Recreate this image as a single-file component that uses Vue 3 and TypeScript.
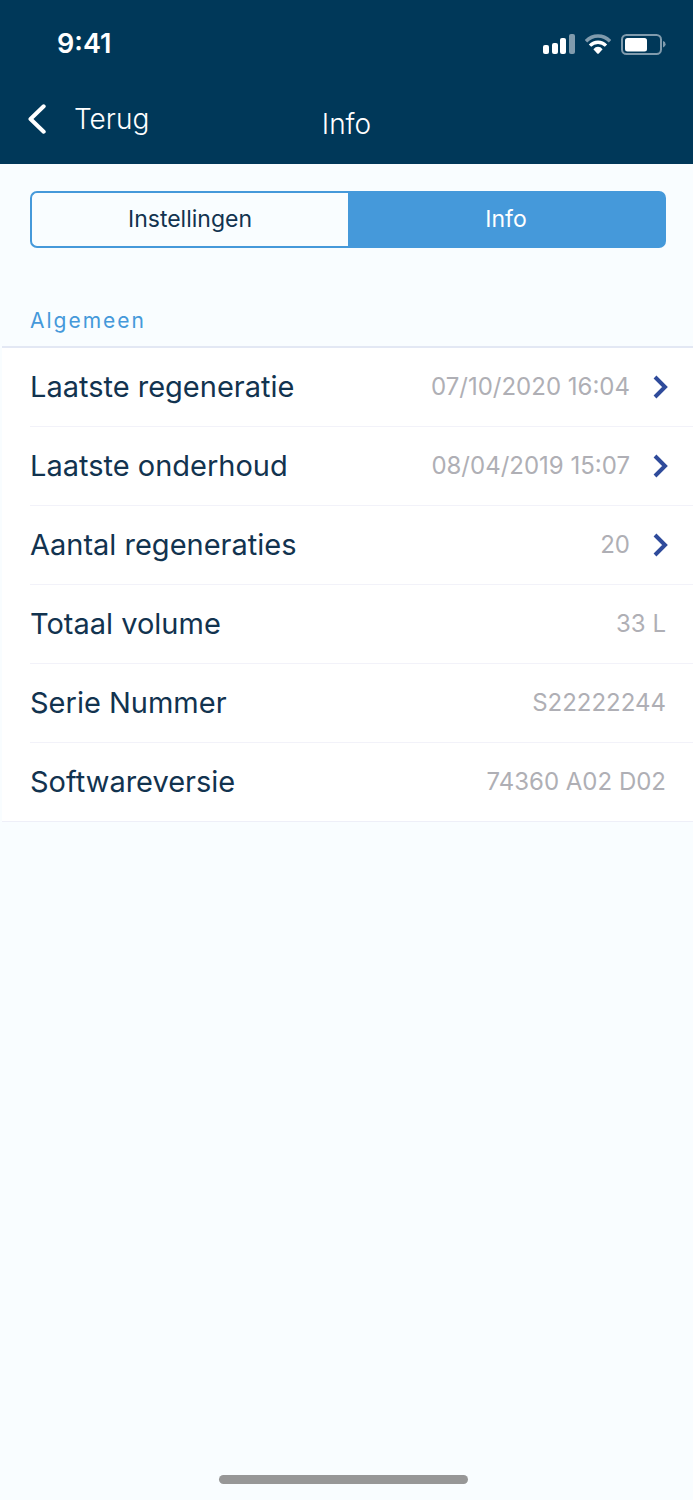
<script setup lang="ts">
import { ref } from 'vue'

interface InfoRow {
  label: string
  value: string
  link: boolean
}

const tabs: string[] = ['Instellingen', 'Info']
const activeTab = ref<string>('Info')

const rows: InfoRow[] = [
  { label: 'Laatste regeneratie', value: '07/10/2020 16:04', link: true },
  { label: 'Laatste onderhoud', value: '08/04/2019 15:07', link: true },
  { label: 'Aantal regeneraties', value: '20', link: true },
  { label: 'Totaal volume', value: '33 L', link: false },
  { label: 'Serie Nummer', value: 'S22222244', link: false },
  { label: 'Softwareversie', value: '74360 A02 D02', link: false },
]
</script>

<template>
  <div class="screen">
    <header class="top">
      <div class="status">
        <span class="time">9:41</span>
        <div class="indicators">
          <svg width="32" height="20" viewBox="0 0 32 20" aria-hidden="true">
            <rect x="0" y="11" width="6" height="9" rx="2" fill="#fff" />
            <rect x="9" y="9" width="6" height="11" rx="2" fill="#fff" />
            <rect x="17" y="4" width="6" height="16" rx="2" fill="#fff" />
            <rect x="26" y="0" width="6" height="20" rx="2" fill="#809bad" />
          </svg>
          <svg width="26" height="20" viewBox="0 0 26 20" aria-hidden="true">
            <g fill="none" stroke-width="3.4">
              <path d="M1 7.2Q6.1 2 13 2T25 7.2" stroke="#809bad" />
              <path d="M5 11.6Q8.4 8.3 13 8.3T21 11.6" stroke="#fff" />
            </g>
            <path d="M8.4 15.2Q10.4 12.8 13 12.8T17.6 15.2L13.8 19.4Q13 20.2 12.2 19.4Z" fill="#fff" />
          </svg>
          <svg width="45" height="21" viewBox="0 0 45 21" aria-hidden="true">
            <rect x="1" y="1" width="39" height="19" rx="4.5" fill="none" stroke="#809bad" stroke-width="2" />
            <rect x="4" y="4" width="22" height="13.5" rx="2.5" fill="#fff" />
            <path d="M42 7Q44.6 7.6 44.6 10.3T42 13.6Z" fill="#809bad" />
          </svg>
        </div>
      </div>
      <nav class="nav">
        <button class="back" type="button">
          <svg width="18" height="30" viewBox="0 0 18 30" aria-hidden="true">
            <path d="M15.7 2.3L2.5 15L15.7 27.7" fill="none" stroke="#fff" stroke-width="4" stroke-linecap="round" stroke-linejoin="round" />
          </svg>
          <span>Terug</span>
        </button>
        <h1 class="title">Info</h1>
      </nav>
    </header>

    <main class="content">
      <div class="tabs" role="tablist">
        <button
          v-for="tab in tabs"
          :key="tab"
          type="button"
          role="tab"
          class="tab"
          :class="{ active: tab === activeTab }"
          :aria-selected="tab === activeTab"
          @click="activeTab = tab"
        >
          {{ tab }}
        </button>
      </div>

      <h2 class="section">Algemeen</h2>
      <ul class="list">
        <li v-for="row in rows" :key="row.label">
          <component :is="row.link ? 'button' : 'div'" class="row" :type="row.link ? 'button' : undefined">
            <span class="label">{{ row.label }}</span>
            <span class="value">{{ row.value }}</span>
            <svg v-if="row.link" class="chevron" width="16" height="24" viewBox="0 0 16 24" aria-hidden="true">
              <path d="M2 2L12 12L2 22" fill="none" stroke="#2f4b9b" stroke-width="4" />
            </svg>
          </component>
        </li>
      </ul>
    </main>

    <div class="home"></div>
  </div>
</template>

<style>
body {
  margin: 0;
  background: #f9fdff;
}
</style>

<style scoped>
.screen {
  display: flex;
  flex-direction: column;
  min-height: 100vh;
  background: #f9fdff;
  font-family: Inter, "Liberation Sans", sans-serif;
  color: #12334f;
}

button {
  border: 0;
  padding: 0;
  background: none;
  color: inherit;
  font: inherit;
  text-align: left;
}

.top {
  background: #003859;
  color: #fff;
}

.status {
  display: flex;
  align-items: center;
  justify-content: space-between;
  height: 88px;
  padding: 0 27px 0 57px;
}

.time {
  font-size: 27px;
  font-weight: 600;
  line-height: 32px;
}

.indicators {
  display: flex;
  align-items: center;
  gap: 10px;
}

.nav {
  display: grid;
  grid-template-columns: 1fr auto 1fr;
  align-items: center;
  height: 76px;
  padding: 0 28px;
}

.back {
  display: flex;
  align-items: center;
  gap: 28px;
  padding-bottom: 14px;
  font-size: 28px;
  font-weight: 300;
  line-height: 36px;
}

.title {
  margin: 0;
  padding-bottom: 4px;
  font-size: 28px;
  font-weight: 300;
  line-height: 36px;
}

.content {
  padding-top: 27px;
}

.tabs {
  display: flex;
  margin: 0 27px 0 30px;
}

.tab {
  flex: 1;
  height: 57px;
  padding-bottom: 2px;
  border: 2px solid #4599da;
  font-size: 23px;
  text-align: center;
}

.tab:first-child {
  border-right: 0;
  border-radius: 7px 0 0 7px;
}

.tab:last-child {
  border-left: 0;
  border-radius: 0 7px 7px 0;
}

.tab.active {
  background: #4599da;
  color: #fff;
}

.section {
  margin: 0;
  padding: 60px 30px 12px;
  font-size: 21px;
  font-weight: 400;
  line-height: 26px;
  letter-spacing: 2px;
  color: #4599da;
}

.list {
  margin: 0 0 0 2px;
  padding: 0;
  list-style: none;
  background: #fff;
  border-top: 2px solid #e3e8f4;
}

.list li {
  padding-left: 28px;
}

.list li:last-child {
  border-bottom: 1px solid #eeeff8;
}

.row {
  display: flex;
  align-items: center;
  box-sizing: border-box;
  width: 100%;
  height: 79px;
  padding-right: 27px;
  border-bottom: 1px solid #f2f2f9;
}

.list li:last-child .row {
  height: 78px;
  border-bottom: 0;
}

.label {
  flex: 1;
  font-size: 29px;
  line-height: 36px;
}

.value {
  font-size: 24px;
  line-height: 32px;
  color: #afafb5;
}

.chevron {
  margin: 0 -3px 0 23px;
}

.home {
  align-self: center;
  width: 36%;
  height: 9px;
  margin: auto 6px 16px 0;
  border-radius: 5px;
  background: #979797;
}
</style>
